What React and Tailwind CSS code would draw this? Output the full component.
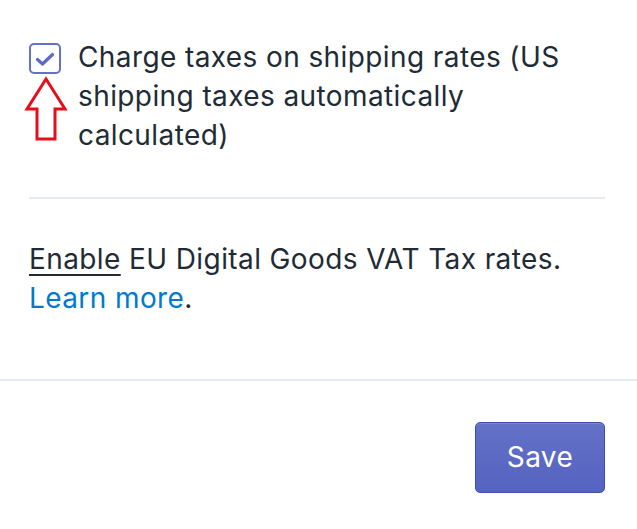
import React from 'react'

function Checkbox() {
  return (
    <div className="w-[32px] h-[31px] shrink-0 rounded-[5px] border-2 border-[#6371c7] bg-white flex items-center justify-center">
      <svg width="20" height="16" viewBox="0 0 20 16" className="mt-[2px]">
        <path d="M2.5 7.5 L7.5 12 L17.5 2.5" fill="none" stroke="#5c6ac4" strokeWidth="3.2" strokeLinecap="round" strokeLinejoin="round" />
      </svg>
    </div>
  )
}

function Arrow() {
  return (
    <svg width="44" height="66" viewBox="0 0 44 66" className="block">
      <polygon points="22,3 41,33 31,33 31,63 13,63 13,33 3,33" fill="none" stroke="#e3101c" strokeWidth="3" strokeLinejoin="miter" />
    </svg>
  )
}

export default function App() {
  return (
    <div className="w-[637px] h-[529px] bg-white text-[#212b36] font-['Inter',sans-serif] text-[28px] tracking-[0.4px] leading-[39px]">
      <div className="px-[29px] pt-[43px]">
        <div className="flex gap-[17px]">
          <div className="flex flex-col w-[32px] shrink-0">
            <Checkbox />
            <div className="-ml-[5px] mt-[2px] w-[44px]">
              <Arrow />
            </div>
          </div>
          <div className="-mt-[5px]">
            Charge taxes on shipping rates (US shipping taxes automatically calculated)
          </div>
        </div>
        <div className="h-[2px] bg-[#e8ebee] w-[576px] mt-[42px]" />
        <div className="pt-[41px] pb-[61px]">
          <span className="underline underline-offset-[5px] decoration-[2px]">Enable</span> EU Digital Goods VAT Tax rates.
          <br />
          <span className="text-[#007ace]">Learn more</span>.
        </div>
      </div>
      <div className="h-[2px] bg-[#e8ebee]" />
      <div className="flex justify-end px-[32px] pt-[41px]">
        <button className="w-[130px] h-[71px] rounded-[5px] border border-[#3f4eae] bg-gradient-to-b from-[#6371c7] to-[#5563c1] text-white text-[28px] shadow-[inset_0_1px_0_rgba(255,255,255,0.15)]">
          Save
        </button>
      </div>
    </div>
  )
}
